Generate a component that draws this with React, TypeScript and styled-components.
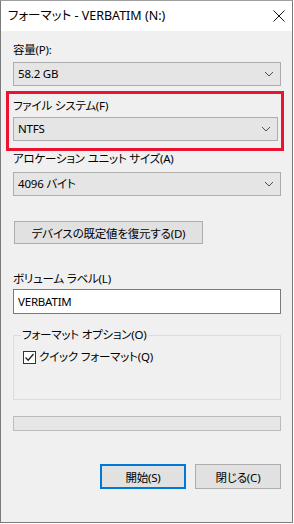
import styled, { createGlobalStyle } from 'styled-components';

const GlobalStyle = createGlobalStyle`
  html, body {
    margin: 0;
    padding: 0;
    background: #ffffff;
  }
  body {
    font-family: "Segoe UI", "Noto Sans", "Noto Sans CJK JP", sans-serif;
    font-size: 11.5px;
    font-feature-settings: "palt";
    letter-spacing: -0.2px;
    color: #000000;
  }
`;

const Chevron = () => (
  <svg width="10" height="6" viewBox="0 0 10 6">
    <path d="M1 1 L5 5 L9 1" fill="none" stroke="#4d4d4d" strokeWidth="1" />
  </svg>
);

const App = () => {
  return (
    <>
      <GlobalStyle />
      <Window>
        <TitleBar>
          <Title>フォーマット - VERBATIM (N:)</Title>
          <CloseButton aria-label="close">
            <svg width="12" height="12" viewBox="0 0 12 12">
              <path d="M0.5 0.5 L11.5 11.5 M11.5 0.5 L0.5 11.5" stroke="#111" strokeWidth="1" />
            </svg>
          </CloseButton>
        </TitleBar>
        <Body>
          <Label $top={11}>容量(P):</Label>
          <Combo $top={4}>
            <span>58.2 GB</span>
            <Chevron />
          </Combo>
          <Highlight>
            <Label $top={0}>ファイル システム(F)</Label>
            <Combo $top={3}>
              <span>NTFS</span>
              <Chevron />
            </Combo>
          </Highlight>
          <Label $top={0}>アロケーション ユニット サイズ(A)</Label>
          <Combo $top={5}>
            <span>4096 バイト</span>
            <Chevron />
          </Combo>
          <RestoreButton>デバイスの既定値を復元する(D)</RestoreButton>
          <Label $top={27}>ボリューム ラベル(L)</Label>
          <TextInput defaultValue="VERBATIM" />
          <GroupBox>
            <Legend>フォーマット オプション(O)</Legend>
            <CheckRow>
              <CheckBox>
                <svg width="11" height="11" viewBox="0 0 11 11">
                  <path d="M1.5 5.5 L4.2 8.2 L9.5 2" fill="none" stroke="#222" strokeWidth="1.3" />
                </svg>
              </CheckBox>
              クイック フォーマット(Q)
            </CheckRow>
          </GroupBox>
          <Progress />
          <Footer>
            <DialogButton $primary>開始(S)</DialogButton>
            <DialogButton>閉じる(C)</DialogButton>
          </Footer>
        </Body>
      </Window>
    </>
  );
};

export default App;

const Window = styled.div`
  width: 293px;
  height: 523px;
  box-sizing: border-box;
  border: 1px solid #7a7a7a;
  border-top-color: #a0a0a0;
  display: flex;
  flex-direction: column;
  background: #f0f0f0;
`;

const TitleBar = styled.div`
  height: 30px;
  background: #ffffff;
  display: flex;
  align-items: center;
  justify-content: space-between;
  padding: 0 7px 0 7px;
  flex-shrink: 0;
`;

const Title = styled.div`
  font-size: 12.5px;
  letter-spacing: 0;
  line-height: 16px;
  color: #000;
`;

const CloseButton = styled.div`
  width: 12px;
  height: 12px;
  display: flex;
  & svg { display: block; }
`;

const Body = styled.div`
  flex: 1;
  display: flex;
  flex-direction: column;
  padding: 0 11px 0 12px;
`;

const Label = styled.div<{ $top: number }>`
  margin-top: ${p => p.$top}px;
  line-height: 16px;
  height: 16px;
  white-space: nowrap;
`;

const Combo = styled.div<{ $top: number }>`
  margin-top: ${p => p.$top}px;
  height: 24px;
  box-sizing: border-box;
  border: 1px solid #adadad;
  background: #e5e5e5;
  display: flex;
  align-items: center;
  justify-content: space-between;
  padding: 0 6px 0 4px;
  line-height: 16px;
  & svg { display: block; }
`;

const Highlight = styled.div`
  margin: 5px -3px 0 -7px;
  border: 3px solid #ec1330;
  padding: 4px 3px 7px 4px;
  display: flex;
  flex-direction: column;
`;

const RestoreButton = styled.div`
  margin-top: 25px;
  align-self: flex-start;
  width: 189px;
  height: 23px;
  box-sizing: border-box;
  border: 1px solid #adadad;
  background: #e1e1e1;
  display: flex;
  align-items: center;
  justify-content: center;
  margin-left: 1px;
`;

const TextInput = styled.input`
  margin-top: 2px;
  height: 25px;
  box-sizing: border-box;
  border: 1px solid #7a7a7a;
  background: #ffffff;
  font: inherit;
  letter-spacing: inherit;
  padding: 0 4px;
  outline: none;
  width: 100%;
`;

const GroupBox = styled.fieldset`
  margin: 13px 0 0 0;
  padding: 6px 9px 0 9px;
  height: 73px;
  box-sizing: border-box;
  border: 1px solid #dcdcdc;
  min-width: 0;
`;

const Legend = styled.legend`
  padding: 0 1px;
  margin-left: -2px;
  line-height: 16px;
`;

const CheckRow = styled.div`
  display: flex;
  align-items: center;
  gap: 3px;
  line-height: 16px;
`;

const CheckBox = styled.div`
  width: 13px;
  height: 13px;
  box-sizing: border-box;
  border: 1px solid #333333;
  background: #ffffff;
  display: flex;
  align-items: center;
  justify-content: center;
  & svg { display: block; }
`;

const Progress = styled.div`
  margin-top: 16px;
  height: 15px;
  box-sizing: border-box;
  border: 1px solid #bcbcbc;
  background: #e6e6e6;
`;

const Footer = styled.div`
  margin-top: 33px;
  display: flex;
  justify-content: flex-end;
  gap: 9px;
`;

const DialogButton = styled.div<{ $primary?: boolean }>`
  width: 86px;
  height: 25px;
  box-sizing: border-box;
  border: ${p => (p.$primary ? '2px solid #0078d7' : '1px solid #adadad')};
  background: #e1e1e1;
  display: flex;
  align-items: center;
  justify-content: center;
`;
